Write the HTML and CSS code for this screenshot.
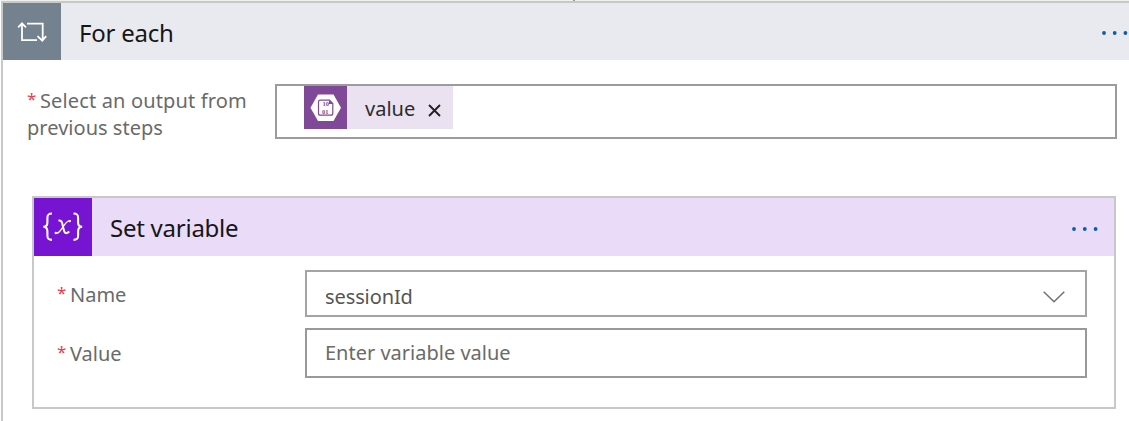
FILE: index.html
```
<!DOCTYPE html>
<html lang="en">
<head>
<meta charset="utf-8">
<title>For each</title>
<link rel="stylesheet" href="styles.css">
</head>
<body>
<div class="connector"></div>
<section class="loop">
  <header class="loop-head">
    <div class="tile tile-loop">
      <svg width="58" height="57" viewBox="0 0 58 57" fill="none" stroke="#fff" stroke-width="1.8">
        <path d="M24 20.6H39.7V37M34.5 33.2L39.3 37.6L43.2 33.2"/>
        <path d="M34 37.1H19V21M15.2 24.4L19 20.4L23 24.4"/>
      </svg>
    </div>
    <h1 class="title title-loop">For each</h1>
    <svg class="dots dots-loop" width="28" height="6" viewBox="0 0 28 6" fill="#0a5cb0"><circle cx="3" cy="3" r="1.9"/><circle cx="13.7" cy="3" r="1.9"/><circle cx="24.4" cy="3" r="1.9"/></svg>
  </header>
  <div class="loop-body">
    <div class="source">
      <div class="label"><span class="star">*</span><span class="l1">Select an output from</span><br><span class="l2">previous steps</span></div>
      <div class="token-box">
        <div class="token">
          <svg class="token-icon" width="43" height="43" viewBox="0 0 43 43" fill="none">
            <path fill="#fff" d="M14 8.5H29.5L37 21.7L29.5 35H14L6.5 21.7Z"/>
            <path stroke="#804998" stroke-width="1.2" d="M16.2 14.2H25.5L28.8 17.5V27.2Q28.8 29.2 27 29.2H16.3Q14.5 29.2 14.5 27.2V15.8Q14.5 14.2 16.2 14.2Z"/>
            <path fill="#804998" d="M25 14L29 18H25Z"/>
            <text x="18.4" y="20.4" class="bits">10</text>
            <text x="18" y="27.8" class="bits">01</text>
          </svg>
          <span class="token-text">value</span>
          <svg class="close" width="13" height="13" viewBox="0 0 13 13" stroke="#222" stroke-width="1.9"><path d="M1 1L12 12M12 1L1 12"/></svg>
        </div>
      </div>
    </div>
    <section class="step">
      <header class="step-head">
        <div class="tile tile-var">
          <svg width="58" height="58" viewBox="0 0 58 58" fill="none" stroke="#fff" stroke-width="2.1">
            <path d="M18 15.5C14 15.5 13.4 17 13.4 20V24.5C13.4 27.5 12.3 28.8 9.3 28.8C12.3 28.8 13.4 30.5 13.4 33.5V37.5C13.4 40.5 14 41.9 18 41.9"/>
            <path d="M39.5 15.5C43.5 15.5 44.1 17 44.1 20V24.5C44.1 27.5 45.2 28.8 48.2 28.8C45.2 28.8 44.1 30.5 44.1 33.5V37.5C44.1 40.5 43.5 41.9 39.5 41.9"/>
            <path stroke-width="2" d="M24.5 22.7C28.2 21.6 28.2 25.5 29.3 30C30.5 35.5 31.8 36.6 35.3 33.6"/>
            <path stroke-width="1.3" d="M36.2 22.7C33.5 22 31.2 25.5 28.8 29.2C25.8 34 24 36.2 21.2 35.2"/>
            <g fill="#fff" stroke="none"><circle cx="35.8" cy="23.1" r="1.2"/><circle cx="21.8" cy="35" r="1.2"/></g>
          </svg>
        </div>
        <h2 class="title title-step">Set variable</h2>
        <svg class="dots dots-step" width="28" height="6" viewBox="0 0 28 6" fill="#0a5cb0"><circle cx="3" cy="3" r="1.9"/><circle cx="13.8" cy="3" r="1.9"/><circle cx="24.6" cy="3" r="1.9"/></svg>
      </header>
      <div class="fields">
        <div class="label name"><span class="star">*</span><span class="t-name">Name</span></div>
        <div class="field select"><span class="t-session">sessionId</span>
          <svg width="22" height="12" viewBox="0 0 22 12" fill="none" stroke="#707070" stroke-width="1.5"><path d="M.7 .7L11 10.8L21.3 .7"/></svg>
        </div>
        <div class="label val"><span class="star">*</span><span class="t-value">Value</span></div>
        <div class="field input"><span class="t-enter">Enter variable value</span></div>
      </div>
    </section>
  </div>
</section>
</body>
</html>
```
FILE: styles.css
```
* { box-sizing: border-box; }
body {
  margin: 0;
  width: 1129px;
  height: 421px;
  overflow: hidden;
  background: #fff;
  font-family: "Noto Sans", "Open Sans", sans-serif;
  font-size: 20px;
  line-height: 27px;
  color: #6a6a6a;
  white-space: nowrap;
}
svg { display: block; flex: none; }
.connector {
  height: 1px;
  background: linear-gradient(#999, #999) 573px 0 / 2px 1px no-repeat #f0f0ef;
}
.loop {
  height: 420px;
  margin-left: 1px;
  border: solid #c8c8c6;
  border-width: 2px 0 0 2px;
}
.loop-head { display: flex; height: 57px; background: #e9eaef; }
.tile { width: 58px; flex: none; }
.tile-loop { background: #748290; }
.tile-var { background: #7714d2; }
.title { margin: 0 0 0 18px; font-weight: 400; font-size: 24px; line-height: 33px; color: #161616; }
.title-loop { padding-top: 13px; letter-spacing: -.25px; }
.title-step { padding-top: 13px; letter-spacing: -.25px; }
.dots { margin-left: auto; }
.dots-loop { margin-top: 27px; }
.dots-step { margin-top: 28px; margin-right: 15px; }
.loop-body { padding: 24px 12px 0 24px; }
.source { display: flex; height: 112px; }
.label { width: 248px; flex: none; }
.source .label { padding-top: 3px; }
.star { display: inline-block; width: 13px; color: #e8404c; font-size: 17px; line-height: 20px; vertical-align: 3px; }
.l1 { letter-spacing: .14px; }
.l2 { letter-spacing: .03px; }
.token-box { flex: 1; height: 55px; border: 2px solid #9c9c9c; padding-left: 27px; }
.token { display: flex; align-items: center; width: 149px; height: 43px; background: #eae2f0; }
.token-icon { background: #804998; }
.bits { fill: #804998; font: 700 6.5px "Liberation Serif", serif; }
.token-text { margin-left: 18px; width: 50px; color: #2c2c2c; padding-top: 2px; }
.close { margin: 5px 0 0 13px; }
.step { margin-left: 5px; width: 1084px; height: 213px; border: 2px solid #c8c8c8; }
.step-head { display: flex; height: 58px; background: #eadbf8; }
.fields {
  display: grid;
  grid-template-columns: 248px 782px;
  grid-template-rows: 47px 50px;
  row-gap: 11px;
  padding: 14px 0 0 23px;
}
.fields .name { padding-top: 11px; }
.fields .val { padding-top: 12px; }
.field { display: flex; justify-content: space-between; border: 2px solid #a4a4a4; padding: 11px 20px 0 18px; }
.select { color: #555; }
.t-session { letter-spacing: -.1px; }
.select svg { margin-top: 8px; }
.input { border-color: #999; padding-top: 9px; }
```
